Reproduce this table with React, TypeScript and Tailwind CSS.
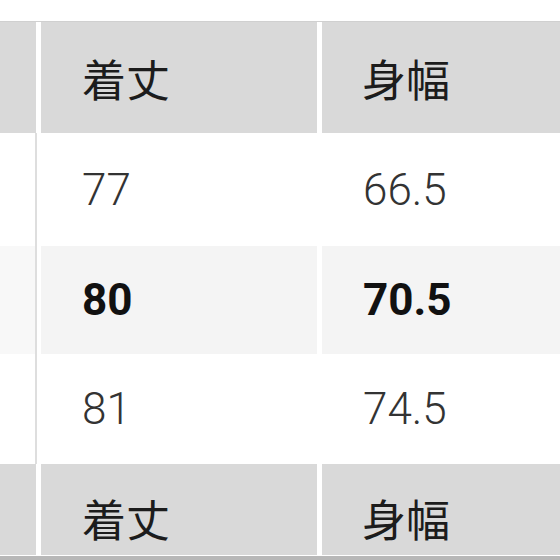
import React from "react";

const cjk = { fontFamily: '"Noto Sans CJK JP", "Noto Sans", sans-serif' };
const num = { fontFamily: 'Roboto, "Liberation Sans", sans-serif' };

function HeaderRow({ h, extra }: { h: string; extra?: string }) {
  return (
    <div className={`flex ${h} bg-white`}>
      <div className="w-[36px] bg-[#d9d9d9]" />
      <div className="w-[5px] bg-white" />
      <div className={`w-[276px] bg-[#d9d9d9] flex items-center pl-[41px] text-[44px] text-[#1c1c1c] ${extra ?? ""}`} style={cjk}>
        着丈
      </div>
      <div className="w-[5px] bg-white" />
      <div className={`flex-1 bg-[#d9d9d9] flex items-center pl-[40px] text-[44px] text-[#1c1c1c] ${extra ?? ""}`} style={cjk}>
        身幅
      </div>
    </div>
  );
}

function BodyRow({ h, a, b, bold, bg, side }: { h: string; a: string; b: string; bold?: boolean; bg: string; side: string }) {
  const txt = bold ? "font-bold text-[#111111]" : "font-light text-[#333333]";
  return (
    <div className={`flex ${h} bg-white`}>
      <div className={`w-[35px] ${side}`} />
      <div className="w-[2px] bg-[#dedede]" />
      <div className="w-[4px] bg-white" />
      <div className={`w-[276px] ${bg} flex items-center pl-[41px] text-[44px] ${txt}`} style={num}>
        {a}
      </div>
      <div className="w-[5px] bg-white" />
      <div className={`flex-1 ${bg} flex items-center pl-[41px] text-[44px] ${txt}`} style={num}>
        {b}
      </div>
    </div>
  );
}

export default function App() {
  return (
    <div className="w-[560px] h-[560px] overflow-hidden bg-white flex flex-col">
      <div className="h-[22px] bg-white border-b border-[#d0d0d0]" />
      <HeaderRow h="h-[111px]" />
      <BodyRow h="h-[113px]" a="77" b="66.5" bg="bg-white" side="bg-white" />
      <BodyRow h="h-[108px]" a="80" b="70.5" bold bg="bg-[#f4f4f4]" side="bg-[#f8f8f8]" />
      <BodyRow h="h-[110px]" a="81" b="74.5" bg="bg-white" side="bg-white" />
      <HeaderRow h="h-[91px]" extra="pt-[17px]" />
      <div className="h-[1px] bg-white" />
      <div className="h-[4px] bg-[#b8b8b8]" />
    </div>
  );
}
